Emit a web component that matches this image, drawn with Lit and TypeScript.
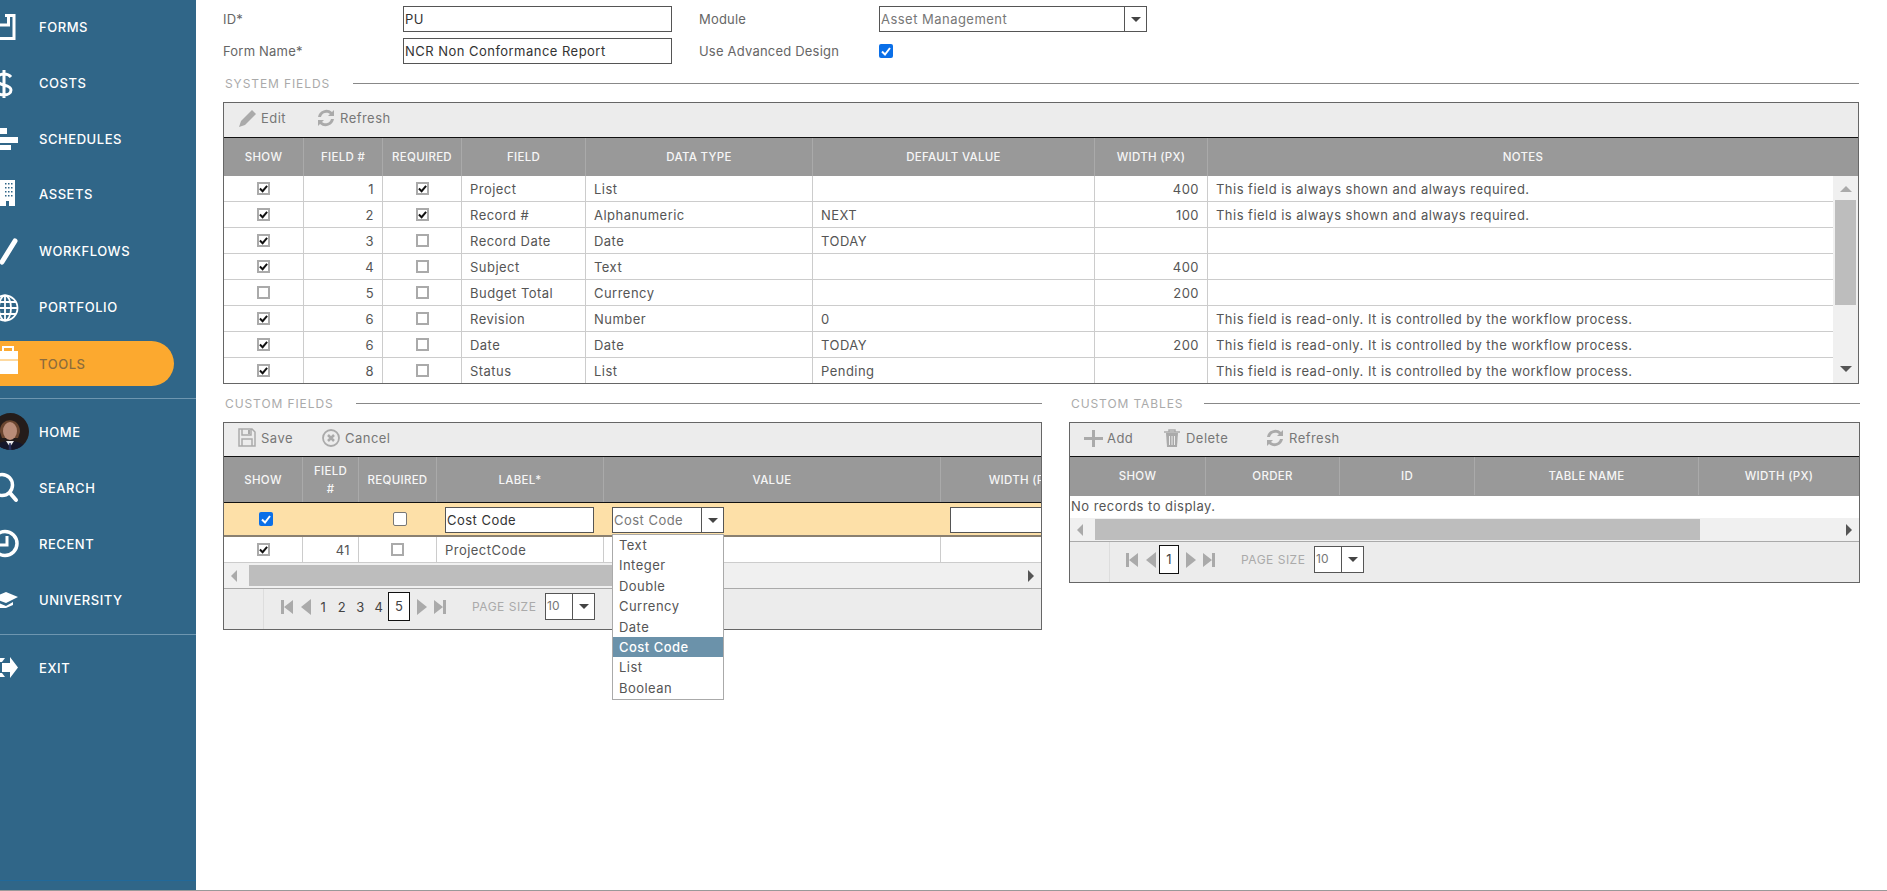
import { LitElement, html, svg, css } from 'lit';
import { customElement } from 'lit/decorators.js';

const ICONS: Record<string, any> = {
  forms: svg`<path d="M5 16.500H14V39.500H-2M8.500 16V26H-2" fill="none" stroke="#fff" stroke-width="3"/>`,
  costs: svg`<path d="M11 22C9 19.500 6.500 19 4 19C0 19-3 21-3 24.500C-3 28 0 29 4 30C8 31 11 32 11 35C11 38 8 40 4 40C1 40-2 39-3 37M4 15V43" fill="none" stroke="#fff" stroke-width="3"/>`,
  schedules: svg`<path d="M-1 17H7V23H-1ZM-1 26H18V32H-1ZM-1 34H11V39H-1Z" fill="#fff"/>`,
  assets: svg`<path d="M-1 14H15V40H9V35H6V40H-1Z" fill="#fff"/><path d="M5 17h1.500v1.500H5ZM8 17h1.500v1.500H8ZM11 17h1.500v1.500H11ZM5 21h1.500v1.500H5ZM8 21h1.500v1.500H8ZM11 21h1.500v1.500H11ZM5 25h1.500v1.500H5ZM8 25h1.500v1.500H8ZM11 25h1.500v1.500H11ZM5 29h1.500v1.500H5ZM8 29h1.500v1.500H8ZM11 29h1.500v1.500H11Z" fill="#306688"/>`,
  workflows: svg`<path d="M2 39L15 18" stroke="#fff" stroke-width="5" stroke-linecap="round"/>`,
  portfolio: svg`<g fill="none" stroke="#fff" stroke-width="1.800"><circle cx="5" cy="29" r="12.500"/><ellipse cx="5" cy="29" rx="6" ry="12.500"/><path d="M-8 29H18M-6 23H16M-6 35H16M5 16V42"/></g>`,
  // the pill is 45px tall, so this one is drawn against a 45px row
  tools: svg`<path d="M-1 10H18V33H-1Z" fill="#fff"/><path d="M3 10V6H13V10" fill="none" stroke="#fff" stroke-width="2"/><path d="M-1 19H18" stroke="#fdd9a0" stroke-width="2"/>`,
  search: svg`<circle cx="2" cy="25" r="10.500" fill="none" stroke="#fff" stroke-width="3.500"/><path d="M10 33L16 40" stroke="#fff" stroke-width="4" stroke-linecap="round"/>`,
  recent: svg`<circle cx="5" cy="27.500" r="12" fill="none" stroke="#fff" stroke-width="3.500"/><path d="M7 20V29H-1" fill="none" stroke="#fff" stroke-width="3"/>`,
  university: svg`<path d="M-8 26L6 20L18 25L6 31Z" fill="#fff"/><path d="M-4 30L6 34L13 30V33L6 36H-4Z" fill="#fff"/>`,
  exit: svg`<path d="M10 17L18 27.500L10 38V32H2V23H10Z" fill="#fff"/><path d="M-1 18H5L2 22H-1ZM-1 37H5L2 33H-1Z" fill="#fff"/>`,
};

const TOOL_ICONS: Record<string, any> = {
  edit: svg`<path d="M14 2L18 6L7 17L1 19L3 13Z" fill="#aaa"/>`,
  refresh: svg`<path d="M17 2V8H11L13 6A5.500 5.500 0 0 0 4 9H1A8.500 8.500 0 0 1 15 4Z" fill="#aaa"/><path d="M1 18V12H7L5 14A5.500 5.500 0 0 0 14 11H17A8.500 8.500 0 0 1 3 16Z" fill="#aaa"/>`,
  save: svg`<path d="M1 1H14L17 4V18H1Z M4 1V7H13V1 M4 18V11H14V18" fill="none" stroke="#aaa" stroke-width="1.500"/><path d="M10 2h2v4h-2z" fill="#aaa"/>`,
  cancel: svg`<circle cx="9" cy="10" r="8" fill="none" stroke="#aaa" stroke-width="1.800"/><path d="M6 7L12 13M12 7L6 13" stroke="#aaa" stroke-width="2.500"/>`,
  add: svg`<path d="M8 2h3v7h8v3h-8v7H8v-7H0V9h8Z" fill="#aaa"/>`,
  trash: svg`<path d="M3 5H15L14 19H4Z" fill="#aaa"/><path d="M1 4H17M6 4V2H12V4" fill="none" stroke="#aaa" stroke-width="1.500"/><path d="M6.500 8V17M9 8V17M11.500 8V17" stroke="#ececec" stroke-width="1"/>`,
};

const SYSTEM_COLS = [80, 79, 79, 124, 227, 282, 113, 630];
const SYSTEM_BODY_COLS = [80, 79, 79, 124, 227, 282, 113, 625];
const CUSTOM_COLS = [79, 56, 78, 167, 337, 164];
const TABLE_COLS = [136, 134, 135, 224, 160];

const SYSTEM_ROWS = [
  [true, 1, true, 'Project', 'List', '', '400', 'This field is always shown and always required.'],
  [true, 2, true, 'Record #', 'Alphanumeric', 'NEXT', '100', 'This field is always shown and always required.'],
  [true, 3, false, 'Record Date', 'Date', 'TODAY', '', ''],
  [true, 4, false, 'Subject', 'Text', '', '400', ''],
  [false, 5, false, 'Budget Total', 'Currency', '', '200', ''],
  [true, 6, false, 'Revision', 'Number', '0', '', 'This field is read-only. It is controlled by the workflow process.'],
  [true, 6, false, 'Date', 'Date', 'TODAY', '200', 'This field is read-only. It is controlled by the workflow process.'],
  [true, 8, false, 'Status', 'List', 'Pending', '', 'This field is read-only. It is controlled by the workflow process.'],
];

const TYPES = ['Text', 'Integer', 'Double', 'Currency', 'Date', 'Cost Code', 'List', 'Boolean'];

const cols = (c: number[]) => `grid-template-columns:${c.map((w) => w + 'px').join(' ')}`;

@customElement('app-root')
export class AppRoot extends LitElement {
  navItem(id: string, label: string, active = false) {
    return html`<div class="nav ${active ? 'active' : ''}">
      <svg class="nav-icon" viewBox="0 0 39 ${active ? 45 : 56}" width="39" height=${active ? 45 : 56}>${ICONS[id]}</svg>
      <span>${label}</span>
    </div>`;
  }

  avatar() {
    return html`<div class="nav">
      <svg class="nav-icon" viewBox="0 0 39 56" width="39" height="56">
        <defs><clipPath id="av"><circle cx="10.500" cy="27.500" r="18.500"/></clipPath></defs>
        <g clip-path="url(#av)">
          <rect x="-9" y="8" width="40" height="40" fill="#241c1a"/>
          <path d="M0 28C-1 13 20 12 20 28L18 34H2Z" fill="#6b4630"/>
          <ellipse cx="10" cy="27" rx="7" ry="9" fill="#b98c78"/>
          <path d="M-8 47C-8 40 3 37 10 37C17 37 27 40 27 47Z" fill="#15172a"/>
          <path d="M6 37L10 43L14 37Z" fill="#e8e8e8"/>
          <path d="M9.300 39H10.700L11.500 46H8.500Z" fill="#28305a"/>
        </g>
      </svg>
      <span>HOME</span>
    </div>`;
  }

  title(label: string) {
    return html`<div class="title"><span>${label}</span><i></i></div>`;
  }

  toolbar(items: { icon: string; label: string; w: number }[], cls = '') {
    return html`<div class="toolbar ${cls}">
      ${items.map((b) => html`<div class="tool" style="width:${b.w}px">
        <svg viewBox="0 0 19 20" width="19" height="20">${TOOL_ICONS[b.icon]}</svg><span>${b.label}</span>
      </div>`)}
    </div>`;
  }

  check(on: boolean) {
    return html`<span class="chk">${on ? html`<svg viewBox="0 0 10 10" width="10" height="10"><path d="M1 5L4 8L9 2" fill="none" stroke="#111" stroke-width="2.200"/></svg>` : ''}</span>`;
  }

  blueCheck() {
    return html`<span class="chk-blue"><svg viewBox="0 0 14 14" width="14" height="14"><path d="M3 7.500L6 10.500L11 4" fill="none" stroke="#fff" stroke-width="2"/></svg></span>`;
  }

  select(value: string, cls = '') {
    return html`<div class="select ${cls}"><span>${value}</span><b><i class="tri down"></i></b></div>`;
  }

  hscroll(thumb: number, cls = '') {
    return html`<div class="hscroll ${cls}">
      <i class="tri left"></i>
      <div class="thumb" style="width:${thumb}px"></div>
      <i class="tri right"></i>
    </div>`;
  }

  pager(pages: number[], current: number, cls = '') {
    return html`<div class="pager ${cls}">
      <div class="pager-cell"></div>
      <div class="pager-nav">
        <svg class="first" viewBox="0 0 12 16" width="12" height="16"><path d="M0 1H3V15H0ZM12 1V15L3 8Z" fill="#aaa"/></svg>
        <svg class="prev" viewBox="0 0 11 16" width="11" height="16"><path d="M10 0V16L0 8Z" fill="#aaa"/></svg>
        ${pages.map((p) => p === current ? html`<span class="page on">${p}</span>` : html`<span class="page">${p}</span>`)}
        <svg class="next" viewBox="0 0 11 16" width="11" height="16"><path d="M1 0V16L11 8Z" fill="#aaa"/></svg>
        <svg class="last" viewBox="0 0 12 16" width="12" height="16"><path d="M12 1H9V15H12ZM0 1V15L9 8Z" fill="#aaa"/></svg>
        <span class="size-label">PAGE SIZE</span>
        ${this.select('10', 'size')}
      </div>
    </div>`;
  }

  render() {
    return html`
      <aside>
        ${this.navItem('forms', 'FORMS')}
        ${this.navItem('costs', 'COSTS')}
        ${this.navItem('schedules', 'SCHEDULES')}
        ${this.navItem('assets', 'ASSETS')}
        ${this.navItem('workflows', 'WORKFLOWS')}
        ${this.navItem('portfolio', 'PORTFOLIO')}
        ${this.navItem('tools', 'TOOLS', true)}
        <hr class="sep first-sep" />
        ${this.avatar()}
        ${this.navItem('search', 'SEARCH')}
        ${this.navItem('recent', 'RECENT')}
        ${this.navItem('university', 'UNIVERSITY')}
        <hr class="sep" />
        ${this.navItem('exit', 'EXIT')}
        <div class="foot"></div>
      </aside>
      <main>
        <div class="form">
          <label>ID*</label><div class="input">PU</div>
          <label class="right">Module</label>${this.select('Asset Management', 'module')}
          <label>Form Name*</label><div class="input">NCR Non Conformance Report</div>
          <label class="right">Use Advanced Design</label><div class="cell-check">${this.blueCheck()}</div>
        </div>

        ${this.title('SYSTEM FIELDS')}
        <section class="grid">
          ${this.toolbar([{ icon: 'edit', label: 'Edit', w: 79 }, { icon: 'refresh', label: 'Refresh', w: 90 }], 'tall')}
          <div class="head sys-head" style=${cols(SYSTEM_COLS)}>
            ${['Show', 'Field #', 'Required', 'Field', 'Data Type', 'Default Value', 'Width (px)', 'Notes'].map((h) => html`<div>${h}</div>`)}
          </div>
          <div class="sys-body">
            <div class="sys-rows">
              ${SYSTEM_ROWS.map((r) => html`<div class="row" style=${cols(SYSTEM_BODY_COLS)}>
                <div class="c">${this.check(r[0] as boolean)}</div>
                <div class="r">${r[1]}</div>
                <div class="c">${this.check(r[2] as boolean)}</div>
                <div>${r[3]}</div><div>${r[4]}</div><div>${r[5]}</div>
                <div class="r">${r[6]}</div><div>${r[7]}</div>
              </div>`)}
            </div>
            <div class="vscroll">
              <i class="tri up"></i>
              <div class="vthumb"></div>
              <i class="tri down"></i>
            </div>
          </div>
        </section>

        <div class="split">
          <div class="half left-half">
            ${this.title('CUSTOM FIELDS')}
            <section class="grid">
              ${this.toolbar([{ icon: 'save', label: 'Save', w: 84 }, { icon: 'cancel', label: 'Cancel', w: 90 }])}
              <div class="head cf-head" style=${cols(CUSTOM_COLS)}>
                ${['Show', 'Field #', 'Required', 'Label*', 'Value', 'Width (px)'].map((h) => html`<div>${h}</div>`)}
              </div>
              <div class="edit-row" style=${cols(CUSTOM_COLS)}>
                <div class="c">${this.blueCheck()}</div>
                <div></div>
                <div class="c"><span class="chk-plain"></span></div>
                <div class="pad"><div class="input">Cost Code</div></div>
                <div class="pad">${this.select('Cost Code', 'value')}</div>
                <div class="pad"><div class="input"></div></div>
              </div>
              <div class="row cf-row" style=${cols(CUSTOM_COLS)}>
                <div class="c">${this.check(true)}</div>
                <div class="r">41</div>
                <div class="c">${this.check(false)}</div>
                <div>ProjectCode</div><div></div><div></div>
              </div>
              ${this.hscroll(420)}
              ${this.pager([1, 2, 3, 4, 5], 5)}
              <ul class="menu">
                ${TYPES.map((t) => html`<li class=${t === 'Cost Code' ? 'sel' : ''}>${t}</li>`)}
              </ul>
            </section>
          </div>
          <div class="half right-half">
            ${this.title('CUSTOM TABLES')}
            <section class="grid">
              ${this.toolbar([{ icon: 'add', label: 'Add', w: 79 }, { icon: 'trash', label: 'Delete', w: 103 }, { icon: 'refresh', label: 'Refresh', w: 90 }])}
              <div class="head ct-head" style=${cols(TABLE_COLS)}>
                ${['Show', 'Order', 'ID', 'Table Name', 'Width (px)'].map((h) => html`<div>${h}</div>`)}
              </div>
              <div class="empty">No records to display.</div>
              ${this.hscroll(605, 'ct')}
              ${this.pager([1], 1, 'ct')}
            </section>
          </div>
        </div>
      </main>
    `;
  }

  static styles = css`
    * { box-sizing: border-box; margin: 0; padding: 0; }
    :host {
      display: flex;
      box-sizing: border-box;
      height: 891px;
      overflow: hidden;
      border-bottom: 1px solid #999;
      background: #fff;
      font-family: Inter, "Liberation Sans", sans-serif;
      font-size: 13px;
      letter-spacing: 0.47px;
      color: #555;
    }
    aside {
      width: 196px;
      flex: none;
      background: #306688;
      display: flex;
      flex-direction: column;
      overflow: hidden;
    }
    .nav {
      height: 56px;
      flex: none;
      display: flex;
      align-items: center;
      color: #fff;
      font-size: 13px;
      font-weight: 500;
      letter-spacing: 0.55px;
    }
    .nav:first-child { margin-top: -1px; }
    .nav:nth-child(4) { margin-top: -1px; }
    .nav:nth-child(5) { margin-top: 1px; }
    .nav-icon { flex: none; overflow: hidden; display: block; }
    .nav.active {
      height: 45px;
      margin: 6px 22px 5px 0;
      background: #fca92f;
      border-radius: 0 23px 23px 0;
      color: #8d6c3c;
      overflow: hidden;
    }
    .sep { border: 0; height: 1px; background: #6e96b0; flex: none; margin: 0 0 5px; }
    .first-sep { margin-top: 7px; }
    .nav + .sep:not(.first-sep) { margin-top: 6px; }
    .foot { margin-top: auto; margin-bottom: 9px; height: 1px; background: #22699a; flex: none; }

    main { flex: 1; min-width: 0; padding: 6px 28px 0 27px; }

    .form {
      display: grid;
      grid-template-columns: 180px 269px 207px 268px;
      grid-auto-rows: 26px;
      row-gap: 6px;
      align-items: center;
      color: #666;
    }
    .form label { letter-spacing: 0.2px; }
    .form .right { padding-left: 27px; }
    .input {
      height: 26px;
      border: 1px solid #555;
      background: #fff;
      padding: 0 1px;
      line-height: 24px;
      color: #333;
      white-space: nowrap;
      overflow: hidden;
    }
    .cell-check { display: flex; align-items: center; }
    .chk-blue {
      width: 14px;
      height: 14px;
      background: #0a6fe8;
      border-radius: 2px;
      display: block;
    }
    .chk-blue svg { display: block; }
    .chk {
      width: 13px;
      height: 13px;
      border: 2px solid #aaa;
      background: #fff;
      display: flex;
      align-items: center;
      justify-content: center;
    }
    .chk svg { display: block; width: 9px; height: 9px; flex: none; }
    .chk-plain {
      width: 14px;
      height: 14px;
      border: 1px solid #777;
      border-radius: 2px;
      background: #fff;
      display: block;
    }

    .select {
      display: flex;
      height: 26px;
      border: 1px solid #555;
      background: #fff;
      align-items: stretch;
      color: #777;
    }
    .select span { flex: 1; padding: 0 1px; line-height: 24px; overflow: hidden; white-space: nowrap; }
    .select b {
      width: 22px;
      flex: none;
      border-left: 1px solid #555;
      display: flex;
      align-items: center;
      justify-content: center;
    }
    .select.value { width: 112px; }
    .select.size { width: 50px; height: 27px; margin-left: 5px; }
    .select.size span { font-size: 12px; letter-spacing: 0; }

    .tri { display: block; width: 0; height: 0; border-style: solid; border-color: transparent; flex: none; }
    .tri.down { border-width: 5px 5px 0; border-top-color: #444; }
    .tri.up { border-width: 0 6px 6px; border-bottom-color: #aaa; }
    .tri.left { border-width: 6px 6px 6px 0; border-right-color: #aaa; }
    .tri.right { border-width: 6px 0 6px 6px; border-left-color: #555; }

    .title {
      display: flex;
      align-items: center;
      height: 20px;
      margin-top: 9px;
      margin-bottom: 9px;
      padding-left: 2px;
      font-size: 12px;
      color: #aaa;
      letter-spacing: 0.9px;
    }
    .title span { flex: none; }
    .title i { flex: 1; height: 1px; background: #888; margin-left: 23px; }

    .grid { position: relative; border: 1px solid #666; background: #fff; }
    .toolbar {
      height: 34px;
      background: #ececec;
      border-bottom: 1px solid #111;
      display: flex;
      align-items: center;
      padding: 0 0 3px 14px;
      color: #777;
    }
    .toolbar.tall { height: 35px; padding-bottom: 4px; }
    .tool { display: flex; align-items: center; gap: 4px; flex: none; }
    .tool svg { display: block; flex: none; }

    .head {
      display: grid;
      background: #999;
      color: #f6f6f6;
      font-size: 11.5px;
      font-weight: 500;
      letter-spacing: 0.3px;
      text-transform: uppercase;
      text-align: center;
      overflow: hidden;
    }
    .head > div {
      display: flex;
      align-items: center;
      justify-content: center;
      padding: 0 4px;
      line-height: 18px;
      border-right: 1px solid #aaa;
    }
    .head > div:last-child { border-right: 0; }
    .sys-head { height: 38px; }
    .cf-head { height: 46px; border-bottom: 1px solid #111; }
    .cf-head > div:nth-child(2) { padding: 0 10px; }
    .ct-head { height: 39px; padding-bottom: 1px; }

    .sys-body { display: flex; height: 207px; overflow: hidden; }
    .sys-rows { width: 1609px; flex: none; }
    .row {
      display: grid;
      height: 26px;
      border-bottom: 1px solid #ccc;
      line-height: 27px;
      color: #555;
    }
    .row > div {
      padding: 0 8px;
      border-right: 1px solid #ccc;
      white-space: nowrap;
      overflow: hidden;
    }
    .row > div:last-child { border-right: 0; }
    .row > .r { text-align: right; }
    .row > .c, .edit-row > .c { display: flex; align-items: center; justify-content: center; padding: 0; }
    .vscroll {
      flex: 1;
      background: #f0f0f0;
      padding: 0 2px;
      display: flex;
      flex-direction: column;
      align-items: center;
    }
    .vscroll .tri.up { margin: 10px 0 8px; }
    .vthumb { width: 100%; height: 105px; background: #bdbdbd; }
    .vscroll .tri.down { margin-top: auto; margin-bottom: 11px; border-width: 6px 6px 0; border-top-color: #555; }

    .edit-row {
      display: grid;
      height: 34px;
      background: #fde0a8;
      border-bottom: 2px solid #8a8070;
      overflow: hidden;
    }
    .edit-row .pad { padding: 4px 10px 0 8px; }
    .edit-row .pad:last-child { padding: 4px 0 0 9px; }
    .edit-row .c > span { margin-left: 4px; }
    .cf-row { height: 26px; overflow: hidden; }
    .hscroll {
      height: 25px;
      background: #f0f0f0;
      display: flex;
      align-items: center;
      padding: 0 7px;
    }
    .hscroll .thumb { height: 21px; background: #bdbdbd; margin-left: 12px; }
    .hscroll .tri.right { margin-left: auto; }
    .hscroll.ct { height: 23px; }

    .pager { display: flex; height: 41px; background: #ececec; border-top: 1px solid #aaa; }
    .pager-cell { width: 40px; flex: none; border-right: 1px solid #ddd; }
    .pager-nav { display: flex; align-items: center; padding-left: 17px; padding-bottom: 5px; }
    .pager-nav svg { flex: none; display: block; }
    .first { margin-right: 8px; }
    .prev { margin-right: 2px; }
    .next { margin-left: 6px; }
    .last { margin-left: 7px; }
    .page { width: 18.500px; text-align: center; color: #444; flex: none; letter-spacing: 0; }
    .page.on { width: 22px; height: 29px; border: 1px solid #111; background: #fff; line-height: 27px; }
    .size-label { margin-left: 26px; font-size: 12px; color: #aaa; white-space: nowrap; width: 68px; flex: none; letter-spacing: 0.5px; }
    .pager.ct .pager-nav { padding-left: 16px; }
    .pager.ct .page.on { width: 20px; }

    .menu {
      position: absolute;
      left: 388px;
      top: 111px;
      width: 112px;
      height: 166px;
      list-style: none;
      background: #fff;
      border: 1px solid #aaa;
      color: #555;
    }
    .menu li { height: 20.400px; line-height: 20.400px; padding-left: 6px; }
    .menu li.sel { background: #6b92aa; color: #fff; font-weight: 500; }

    .split { display: flex; gap: 27px; }
    .half { flex: none; }
    .left-half { width: 819px; }
    .right-half { width: 791px; }
    .left-half .title i { margin-left: 22px; }
    .right-half .title i { margin-left: 21px; }
    .empty { height: 22px; line-height: 21px; padding-left: 1px; }
  `;
}
